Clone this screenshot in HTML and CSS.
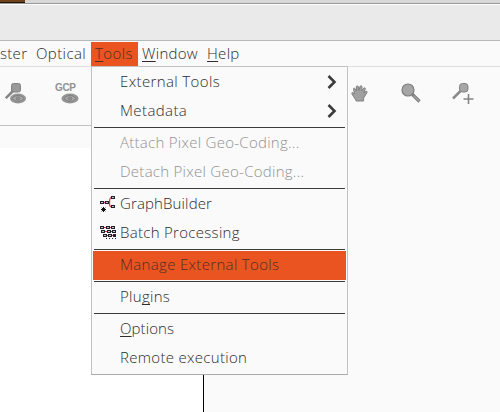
FILE: index.html
```
<!DOCTYPE html>
<html lang="en">
<head>
<meta charset="utf-8">
<title>Tools menu</title>
<link rel="stylesheet" href="styles.css">
</head>
<body>
<div class="window">
  <div class="desktop-edge"><span class="wallpaper"></span></div>
  <div class="titlebar"></div>
  <nav class="menubar">
    <span class="entry raster">ster</span>
    <span class="entry optical">Optical</span>
    <div class="entry tools active"><u>T</u>ools
      <div class="menu">
        <div class="item external">External Tools<svg class="arrow" viewBox="0 0 10 16"><path d="M1.500 2 7.500 8 1.500 14"/></svg></div>
        <div class="item metadata">Metadata<svg class="arrow" viewBox="0 0 10 16"><path d="M1.500 2 7.500 8 1.500 14"/></svg></div>
        <div class="separator"></div>
        <div class="item attach disabled">Attach Pixel Geo-Coding...</div>
        <div class="item detach disabled">Detach Pixel Geo-Coding...</div>
        <div class="separator"></div>
        <div class="item graph"><svg class="glyph" viewBox="0 0 16 16"><path d="M4 6.500h5M13 1.500h-2Q9.500 2 9.500 6.500T11 10.500h2" fill="none" stroke="#d84050" stroke-width="1.300"/><path d="M0 5h4v3H0zM5 5h4v3H5zM11 0h4v3h-4zM11 9h4v3h-4z" fill="#20222c"/><path d="M1 6h2v1H1zM6 6h2v1H6zM12 1h2v1h-2zM12 10h2v1h-2z" fill="#b8c0d8"/><path d="M3.500 11v5M1 13.500h5M1.700 11.700l3.600 3.600M5.300 11.700l-3.600 3.600" stroke="#111"/></svg>GraphBuilder</div>
        <div class="item batch"><svg class="glyph" viewBox="0 0 16 16" shape-rendering="crispEdges"><path d="M2 2.500h12M3 6.500h12M4 10.500h11" stroke="#d03040"/><path d="M0 1h4v3H0zM5.500 1h4v3h-4zM11 1h4v3h-4zM1 5h4v3H1zM6.500 5h4v3h-4zM12 5h4v3h-4zM3 9h4v3H3zM8 9h4v3H8zM13 9h3v3h-3zM6 13h1v1H6zM9 13h1v1H9zM12 13h1v1h-1zM15 13h1v1h-1z" fill="#20222c"/><path d="M1 2h2v1H1zM6.500 2h2v1h-2zM12 2h2v1h-2zM2 6h2v1H2zM7.500 6h2v1h-2zM13 6h2v1h-2zM4 10h2v1H4zM9 10h2v1H9z" fill="#c8bcc8"/></svg>Batch Processing</div>
        <div class="separator"></div>
        <div class="item manage selected">Manage External Tools</div>
        <div class="separator"></div>
        <div class="item plugins">Plu<u>g</u>ins</div>
        <div class="separator"></div>
        <div class="item options"><u>O</u>ptions</div>
        <div class="item remote">Remote execution</div>
      </div>
    </div>
    <span class="entry windows"><u>W</u>indow</span>
    <span class="entry help"><u>H</u>elp</span>
  </nav>
  <div class="toolbar">
    <div class="tools-left">
      <svg class="pin-eye" viewBox="0 0 22 22"><rect x="6.500" y="1.500" width="9" height="8.500" rx="2" fill="#9a9a9a" stroke="#828282"/><path d="M8 9 .8 16.200" stroke="#858585" stroke-width="2.600"/><ellipse cx="13" cy="16.500" rx="8" ry="5" fill="#969696"/><path d="M7 16.500q6-6.500 12 0q-6 6-12 0z" fill="#a8a8a8" stroke="#808080"/><circle cx="13" cy="16.500" r="1.800" fill="#909090" stroke="#7c7c7c" stroke-width=".7"/></svg>
      <div class="gcp"><span>GCP</span><svg viewBox="0 0 18 11"><ellipse cx="9" cy="5.500" rx="8.500" ry="5" fill="#969696"/><path d="M3 5.500q6-6.500 12 0q-6 6-12 0z" fill="#a8a8a8" stroke="#808080"/><circle cx="9" cy="5.500" r="1.800" fill="#909090" stroke="#7c7c7c" stroke-width=".7"/></svg></div>
    </div>
    <div class="tools-right">
      <svg class="hand" viewBox="0 0 17 17"><path d="M5 15.500C3.500 12.500 1.500 10.500.8 8.500 .5 7.300 2 7 3.800 9.200L2.500 4.500C2 3 3.600 2.600 4.200 4L5.500 6 5.300 2C5.400.5 7.200.5 7.400 2L8 5.500 9 1.500C9.500.2 11.100.7 11 2L10.800 6 12.800 3.200C13.600 2.200 14.700 3 14.200 4.200L12.900 8 14.500 6.600C15.500 5.800 16.600 6.500 16 7.600L12.600 13v3H5z" fill="#a0a0a0" stroke="#808080" stroke-width="1"/></svg>
      <svg class="lens" viewBox="0 0 20 20"><circle cx="7" cy="7" r="6" fill="#a6a6a6" stroke="#7d7d7d" stroke-width="1.200"/><path d="m11.500 11.500 7 7" stroke="#777" stroke-width="3.200"/><path d="m12.500 12.500 5.500 5.500" stroke="#aaa" stroke-width="1.200"/></svg>
      <svg class="pin-add" viewBox="0 0 22 22"><rect x="7.500" y="1.500" width="8.500" height="8.500" rx="3" fill="#a6a6a6" stroke="#828282"/><path d="M8.500 9 1 16.500" stroke="#8a8a8a" stroke-width="2.500"/><path d="M16.500 12v10M11.500 17h10" stroke="#858585" stroke-width="1.600"/></svg>
    </div>
  </div>
  <main class="workspace">
    <div class="tool-window"></div>
    <div class="view"></div>
  </main>
</div>
</body>
</html>
```
FILE: styles.css
```
* { box-sizing: border-box; }
body { margin: 0; background: #fafafa; overflow: hidden; font: 300 15px/20px "Open Sans", "Noto Sans", sans-serif; color: #2c2c2c; }
.window { width: 500px; height: 412px; display: flex; flex-direction: column; }
.desktop-edge { height: 4px; flex: none; background: #d8d8d8; border-bottom: 1px solid #999; }
.wallpaper { display: block; width: 25px; height: 3px; background: linear-gradient(#70421a 0 2px, #21140c 2px); }
.titlebar { height: 37px; flex: none; background: #eaeaea; border-top: 1px solid #fff; border-bottom: 1px solid #b8b8b8; }
.menubar { height: 26px; flex: none; display: flex; padding-top: 1px; border-bottom: 1px solid #dedede; }
.entry { height: 24px; line-height: 22px; padding-left: 4px; white-space: nowrap; flex: none; }
u { text-decoration-thickness: 1px; text-underline-offset: 2px; text-decoration-skip-ink: none; }
.raster { width: 32px; padding-left: 0; letter-spacing: .3px; }
.optical { width: 59px; letter-spacing: .4px; }
.tools { width: 47px; position: relative; letter-spacing: .4px; }
.windows { width: 65px; letter-spacing: .3px; }
.help { letter-spacing: .3px; }
.active { background: #e95420; color: #4d3022; }
.menu { position: absolute; z-index: 2; left: 0; top: 24px; width: 257px; height: 309px; padding: 1px; border: 1px solid #c2c2c2; border-bottom-color: #aaa; background: #fafafa; color: #2c2c2c; letter-spacing: 0; }
.item { position: relative; height: 29px; line-height: 26px; padding-left: 27px; }
.external { letter-spacing: .38px; }
.metadata { letter-spacing: .4px; }
.attach, .detach { letter-spacing: .27px; }
.graph { letter-spacing: .13px; }
.batch { letter-spacing: .3px; }
.manage { letter-spacing: .33px; }
.plugins { letter-spacing: .3px; }
.options { letter-spacing: .1px; }
.remote { letter-spacing: .3px; }
.separator { height: 3px; margin: 0 1px; border: solid #fafafa; border-width: 1px 0; background: #3c3c3c; }
.disabled { color: #929292; }
.selected { background: #e95420; color: #4d3022; }
.arrow { position: absolute; right: 9px; top: 6px; width: 10px; height: 16px; fill: none; stroke: #3c3c3c; stroke-width: 2.6; }
.glyph { position: absolute; left: 7px; top: 6px; width: 16px; height: 16px; }
.toolbar { height: 59px; flex: none; display: flex; justify-content: space-between; }
.tools-left { width: 91px; display: flex; border-bottom: 1px solid #c2c2c2; padding: 15px 0 0 5px; }
.pin-eye { width: 22px; height: 22px; }
.gcp { margin-left: 28px; width: 24px; font: 700 10px/9px "Liberation Sans", sans-serif; color: #929292; }
.gcp span { display: block; height: 11px; padding-top: 1px; letter-spacing: -.4px; }
.gcp svg { display: block; width: 18px; height: 11px; margin-left: 6px; }
.tools-right { width: 149px; display: flex; padding-top: 16px; }
.hand { width: 17px; height: 17px; margin-top: 2px; }
.lens { width: 20px; height: 20px; margin-left: 33px; }
.pin-add { width: 22px; height: 22px; margin-left: 31px; margin-top: -1px; }
.workspace { flex: 1; display: flex; padding-top: 22px; }
.tool-window { width: 204px; background: #fff; border-right: 1px solid #000; }
.view { flex: 1; background: #fafafa; }
```
